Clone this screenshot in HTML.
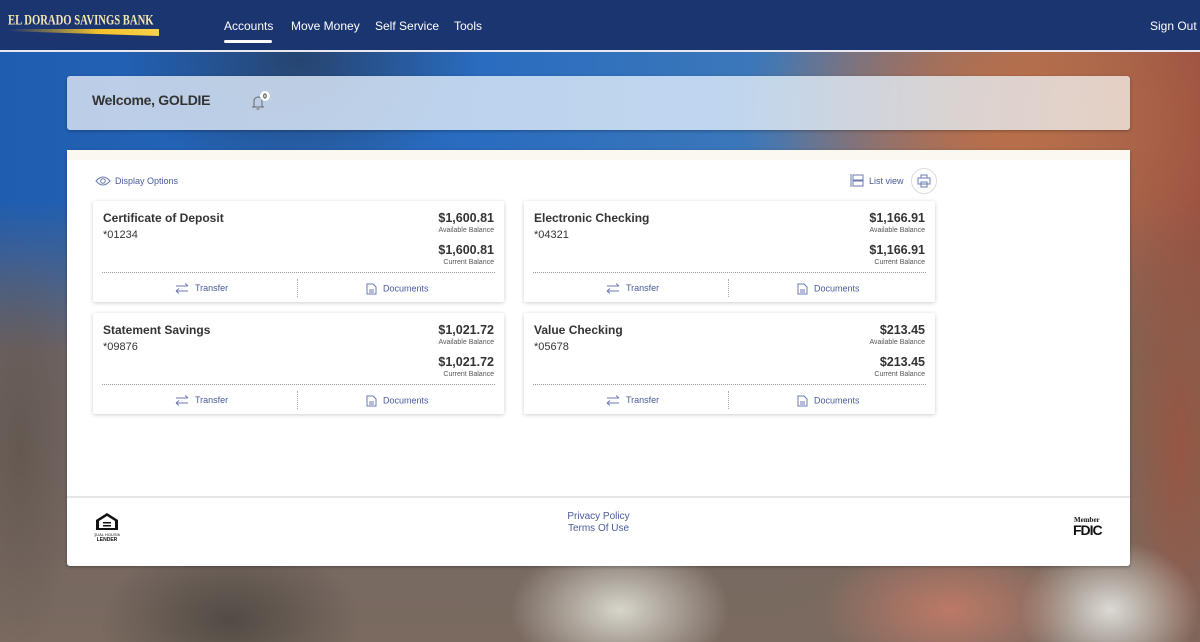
<!DOCTYPE html>
<html><head><style>
*{margin:0;padding:0;box-sizing:border-box}
body{width:1200px;height:642px;overflow:hidden;font-family:"Liberation Sans",Arial,sans-serif;position:relative;
background:
radial-gradient(ellipse 180px 120px at 300px 60px,rgba(40,40,50,.55),transparent),
radial-gradient(ellipse 260px 200px at 1000px 120px,rgba(190,110,70,.9),transparent),
linear-gradient(90deg,#1f5db0 0%,#2a6cbf 40%,#3d78b8 65%,#a0705a 85%,#9a5040 100%);}
.bgbottom{position:absolute;left:0;right:0;top:200px;bottom:0;
background:
radial-gradient(ellipse 110px 70px at 620px 410px,rgba(225,225,215,.9),transparent),
radial-gradient(ellipse 130px 70px at 950px 410px,rgba(205,125,105,.8),transparent),
radial-gradient(ellipse 90px 70px at 1110px 410px,rgba(230,230,225,.9),transparent),
radial-gradient(ellipse 130px 80px at 230px 420px,rgba(55,55,50,.6),transparent),
radial-gradient(ellipse 60px 200px at 20px 250px,rgba(90,80,70,.6),transparent),
radial-gradient(ellipse 60px 250px at 1180px 250px,rgba(160,80,60,.7),transparent),
linear-gradient(180deg,rgba(120,100,90,0) 0%,rgba(125,100,85,.85) 35%,#7a6a60 100%);}
.hdr{position:absolute;left:0;top:0;width:1200px;height:52px;background:#1b3570;border-bottom:2px solid #e8e8f0}
.logo{position:absolute;left:8px;top:13px;font-family:"Liberation Serif",serif;font-weight:bold;color:#f4e7b0;font-size:14px;white-space:nowrap;transform-origin:0 0;transform:scale(0.76,1.05)}
.swoosh{position:absolute;left:8px;top:29px;width:151px;height:7px;background:linear-gradient(90deg,#1b3570,#f3c22b 60%,#f7d24a);clip-path:polygon(0 0,100% 0,100% 100%,0 30%)}
.nav{position:absolute;top:19px;color:#fff;font-size:12px}
.ul{position:absolute;left:224px;top:40px;width:48px;height:3px;background:#fff;border-radius:2px}
.welcome{position:absolute;left:67px;top:76px;width:1063px;height:54px;background:linear-gradient(90deg,rgba(215,225,240,.85),rgba(205,225,245,.9) 60%,rgba(235,220,210,.9));border-radius:3px;box-shadow:0 1px 3px rgba(0,0,0,.3)}
.main{position:absolute;left:67px;top:150px;width:1063px;height:416px;background:#fff;border-radius:3px;box-shadow:0 1px 3px rgba(0,0,0,.3)}
.strip{position:absolute;left:0;top:0;width:100%;height:10px;background:#fbf8f0}
.card{position:absolute;width:411px;height:101px;background:#fff;box-shadow:0 1px 4px rgba(0,0,0,.2);border-radius:2px}
.t{position:absolute;left:10px;top:10px;font-size:12px;font-weight:bold;color:#333}
.n{position:absolute;left:10px;top:28px;font-size:11px;color:#333}
.a{position:absolute;right:10px;font-size:12.5px;font-weight:bold;color:#333;text-align:right}
.l{position:absolute;right:10px;font-size:7px;color:#555}
.dots{position:absolute;left:9px;right:9px;top:71px;border-top:1px dotted #999}
.vd{position:absolute;left:204px;top:78px;height:18px;border-left:1px dotted #aaa}
.lk{position:absolute;top:82px;font-size:9px;color:#4a5a9a}
.lk svg{vertical-align:middle;margin-right:6px}
.blue{color:#4a5a9a}
</style></head><body>
<div class="bgbottom"></div>
<div class="hdr">
<div class="logo">EL DORADO SAVINGS BANK</div><div class="swoosh"></div>
<div class="nav" style="left:224px">Accounts</div>
<div class="nav" style="left:291px">Move Money</div>
<div class="nav" style="left:375px">Self Service</div>
<div class="nav" style="left:454px">Tools</div>
<div class="nav" style="left:1150px">Sign Out</div>
<div class="ul"></div>
</div>
<div class="welcome">
<div style="position:absolute;left:25px;top:16px;font-size:14px;font-weight:bold;color:#333;letter-spacing:-.3px">Welcome, GOLDIE</div>
<svg style="position:absolute;left:182px;top:14px" width="24" height="20" viewBox="0 0 24 20"><path d="M3 17h12M5 17v-6a4 4 0 0 1 8 0v6M7.5 19h3" stroke="#666" fill="none" stroke-width="1"/><circle cx="16" cy="6" r="5" fill="#fff"/><text x="16" y="8.5" font-size="7" font-weight="bold" text-anchor="middle" font-family="Liberation Sans" fill="#333">0</text></svg>
</div>
<div class="main">
<div class="strip"></div>
<svg style="position:absolute;left:28px;top:26px" width="16" height="10" viewBox="0 0 16 10"><path d="M1 5Q8-3 15 5Q8 13 1 5Z" stroke="#6a7ab0" fill="none"/><circle cx="8" cy="5" r="2.3" stroke="#6a7ab0" fill="none"/></svg>
<div class="blue" style="position:absolute;left:48px;top:26px;font-size:9px">Display Options</div>
<svg style="position:absolute;left:783px;top:23px" width="14" height="15" viewBox="0 0 14 15"><path d="M1 1v13M3 2h10v5H3zM3 8h10v5H3z" stroke="#6a7ab0" fill="none"/></svg>
<div class="blue" style="position:absolute;left:802px;top:26px;font-size:9px">List view</div>
<div style="position:absolute;left:844px;top:18px;width:26px;height:26px;border:1px solid #ddd;border-radius:50%"></div>
<svg style="position:absolute;left:850px;top:24px" width="14" height="14" viewBox="0 0 14 14"><path d="M4 4V1h6v3M1 4h12v6H1zM4 8h6v5H4z" stroke="#6a7ab0" fill="none"/></svg>
<div style="position:absolute;left:0;top:346px;width:100%;border-top:2px solid #e6e6e6"></div>
<svg style="position:absolute;left:27px;top:362px" width="26" height="30" viewBox="0 0 26 30"><path d="M13 1L2 8v10h22V8z" fill="#111"/><path d="M13 4L5 9v7h16V9z" fill="#fff"/><rect x="9" y="10" width="8" height="1.5" fill="#111"/><rect x="9" y="13" width="8" height="1.5" fill="#111"/><text x="13" y="24" font-size="4" text-anchor="middle" font-family="Liberation Sans" fill="#111">EQUAL HOUSING</text><text x="13" y="29" font-size="5" font-weight="bold" text-anchor="middle" font-family="Liberation Sans" fill="#111">LENDER</text></svg>
<div class="blue" style="position:absolute;left:0;width:1063px;text-align:center;top:361px;font-size:10px;line-height:12px">Privacy Policy<br>Terms Of Use</div>
<div style="position:absolute;left:1007px;top:366px;font-family:'Liberation Serif',serif;font-size:7px;font-weight:bold;color:#111">Member</div>
<div style="position:absolute;left:1006px;top:372px;font-size:14px;font-weight:bold;color:#111;letter-spacing:-1px">FDIC</div>
</div>

<div class="card" style="left:93px;top:201px"><div class="t">Certificate of Deposit</div><div class="n">*01234</div><div class="a" style="top:10px">$1,600.81</div><div class="l" style="top:26px">Available Balance</div><div class="a" style="top:42px">$1,600.81</div><div class="l" style="top:58px">Current Balance</div><div class="dots"></div><div class="vd"></div><div class="lk" style="left:82px"><svg width="14" height="11" viewBox="0 0 14 11"><path d="M1 3h12M10 0.5l3 2.5M13 8H1M4 5.5L1 8M4 10.5L1 8" stroke="#6a7ab0" fill="none"/></svg>Transfer</div><div class="lk" style="left:273px"><svg width="11" height="12" viewBox="0 0 11 12"><path d="M1 1h6l3 3v7H1zM3 7h5M3 9h5" stroke="#6a7ab0" fill="none"/></svg>Documents</div></div>
<div class="card" style="left:524px;top:201px"><div class="t">Electronic Checking</div><div class="n">*04321</div><div class="a" style="top:10px">$1,166.91</div><div class="l" style="top:26px">Available Balance</div><div class="a" style="top:42px">$1,166.91</div><div class="l" style="top:58px">Current Balance</div><div class="dots"></div><div class="vd"></div><div class="lk" style="left:82px"><svg width="14" height="11" viewBox="0 0 14 11"><path d="M1 3h12M10 0.5l3 2.5M13 8H1M4 5.5L1 8M4 10.5L1 8" stroke="#6a7ab0" fill="none"/></svg>Transfer</div><div class="lk" style="left:273px"><svg width="11" height="12" viewBox="0 0 11 12"><path d="M1 1h6l3 3v7H1zM3 7h5M3 9h5" stroke="#6a7ab0" fill="none"/></svg>Documents</div></div>
<div class="card" style="left:93px;top:313px"><div class="t">Statement Savings</div><div class="n">*09876</div><div class="a" style="top:10px">$1,021.72</div><div class="l" style="top:26px">Available Balance</div><div class="a" style="top:42px">$1,021.72</div><div class="l" style="top:58px">Current Balance</div><div class="dots"></div><div class="vd"></div><div class="lk" style="left:82px"><svg width="14" height="11" viewBox="0 0 14 11"><path d="M1 3h12M10 0.5l3 2.5M13 8H1M4 5.5L1 8M4 10.5L1 8" stroke="#6a7ab0" fill="none"/></svg>Transfer</div><div class="lk" style="left:273px"><svg width="11" height="12" viewBox="0 0 11 12"><path d="M1 1h6l3 3v7H1zM3 7h5M3 9h5" stroke="#6a7ab0" fill="none"/></svg>Documents</div></div>
<div class="card" style="left:524px;top:313px"><div class="t">Value Checking</div><div class="n">*05678</div><div class="a" style="top:10px">$213.45</div><div class="l" style="top:26px">Available Balance</div><div class="a" style="top:42px">$213.45</div><div class="l" style="top:58px">Current Balance</div><div class="dots"></div><div class="vd"></div><div class="lk" style="left:82px"><svg width="14" height="11" viewBox="0 0 14 11"><path d="M1 3h12M10 0.5l3 2.5M13 8H1M4 5.5L1 8M4 10.5L1 8" stroke="#6a7ab0" fill="none"/></svg>Transfer</div><div class="lk" style="left:273px"><svg width="11" height="12" viewBox="0 0 11 12"><path d="M1 1h6l3 3v7H1zM3 7h5M3 9h5" stroke="#6a7ab0" fill="none"/></svg>Documents</div></div>
</body></html>
